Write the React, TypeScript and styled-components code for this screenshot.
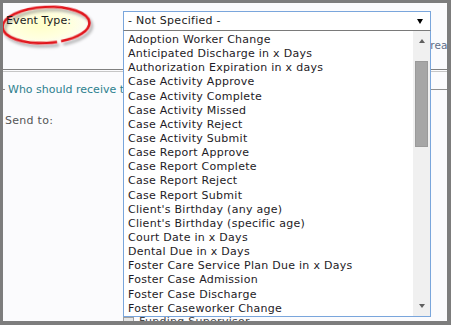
import React from 'react';
import styled, { createGlobalStyle } from 'styled-components';

const GlobalStyle = createGlobalStyle`
  html, body {
    margin: 0;
    padding: 0;
    background: #ffffff;
  }
  body {
    font-family: 'DejaVu Sans', Verdana, sans-serif;
    font-size: 11px;
  }
`;

const eventTypes = [
  'Adoption Worker Change',
  'Anticipated Discharge in x Days',
  'Authorization Expiration in x days',
  'Case Activity Approve',
  'Case Activity Complete',
  'Case Activity Missed',
  'Case Activity Reject',
  'Case Activity Submit',
  'Case Report Approve',
  'Case Report Complete',
  'Case Report Reject',
  'Case Report Submit',
  "Client's Birthday (any age)",
  "Client's Birthday (specific age)",
  'Court Date in x Days',
  'Dental Due in x Days',
  'Foster Care Service Plan Due in x Days',
  'Foster Case Admission',
  'Foster Case Discharge',
  'Foster Caseworker Change',
];

const Frame = styled.div`
  position: relative;
  box-sizing: border-box;
  width: 451px;
  height: 325px;
  border-style: solid;
  border-color: #7d7d7d;
  border-width: 3px 4px 4px 3px;
  background: #fbfbfd;
  overflow: hidden;
  display: flex;
  flex-direction: column;
  color: #222;
  font-size: 11px;
  line-height: 14px;
  letter-spacing: 0.27px;
  white-space: nowrap;
`;

const HeaderRow = styled.div`
  display: flex;
  align-items: center;
  flex: none;
  height: 20px;
  margin-top: 8px;
`;

const LabelCell = styled.div`
  position: relative;
  box-sizing: border-box;
  width: 120px;
  flex: none;
  padding-left: 3px;
`;

const LabelText = styled.span`
  position: relative;
  z-index: 1;
  color: #1b1b1b;
  letter-spacing: 0.1px;
`;

// red hand-drawn ring around the label
const Annotation = styled.svg`
  position: absolute;
  left: -3px;
  top: -11px;
  z-index: 0;
  overflow: visible;
`;

const SelectWrap = styled.div`
  position: relative;
  width: 308px;
  height: 20px;
  flex: none;
`;

const SelectBox = styled.div`
  box-sizing: border-box;
  display: flex;
  align-items: center;
  justify-content: space-between;
  height: 20px;
  padding: 0 7px 0 4px;
  border: 1px solid #7aa6dc;
  background: #ffffff;
  color: #1b1b1b;
`;

const Arrow = styled.span<{ $dir: 'up' | 'down'; $color: string; $w: number; $h: number }>`
  width: 0;
  height: 0;
  border-left: ${({ $w }) => $w / 2}px solid transparent;
  border-right: ${({ $w }) => $w / 2}px solid transparent;
  border-top: ${({ $dir, $h, $color }) => ($dir === 'down' ? `${$h}px solid ${$color}` : 'none')};
  border-bottom: ${({ $dir, $h, $color }) => ($dir === 'up' ? `${$h}px solid ${$color}` : 'none')};
`;

const DropList = styled.div`
  position: absolute;
  z-index: 5;
  left: 0;
  top: 19px;
  box-sizing: border-box;
  width: 308px;
  height: 287px;
  display: flex;
  border: 1px solid #7aa6dc;
  border-top-color: #7a7a7a;
  background: #ffffff;
`;

const Options = styled.div`
  flex: 1;
  overflow: hidden;
  padding: 2px 0 0 4px;
`;

const Option = styled.div`
  height: 14.15px;
  line-height: 14.15px;
  color: #1e1b26;
`;

const ScrollBar = styled.div`
  width: 17px;
  flex: none;
  display: flex;
  flex-direction: column;
  background: #f0f0f0;
`;

const ScrollButton = styled.div`
  height: 20px;
  display: flex;
  align-items: center;
  justify-content: center;
`;

const Thumb = styled.div`
  box-sizing: border-box;
  height: 86px;
  margin: 10px 2px 0;
  background: #a6a6a6;
  border: 1px solid #9a9a9a;
`;

const Spacer = styled.div`
  flex: 1;
`;

const SideRow = styled.div`
  margin-top: 7px;
  padding-left: 420px;
  color: #5f6f88;
  font-size: 10.5px;
  letter-spacing: 0;
`;

const Rule = styled.div`
  margin-top: 17px;
  flex: none;
  height: 1px;
  border-top: 1px solid #808080;
  border-bottom: 1px solid #c6c6c6;
`;

const Section = styled.div`
  display: flex;
  align-items: center;
  margin-top: 11px;
  height: 14px;
  color: #2d7f8e;
  letter-spacing: 0;

  &::before,
  &::after {
    content: '';
    height: 1px;
    margin-bottom: 2px;
    background: #8f8f8f;
  }
  &::before {
    width: 2px;
    margin-right: 3px;
  }
  &::after {
    flex: 1;
    margin-left: 3px;
  }
`;

const FieldLabel = styled.div`
  margin-top: 17px;
  padding-left: 2px;
  color: #555;
`;

const CheckRow = styled.div`
  display: flex;
  align-items: flex-start;
  margin-top: 187px;
  padding-left: 120px;
  color: #444;
`;

const CheckBox = styled.span`
  box-sizing: border-box;
  width: 11px;
  height: 11px;
  margin: 2px 5px 0 0;
  border: 1px solid #a0a0a0;
  background: #e6e6e6;
`;

const App = () => (
  <>
    <GlobalStyle />
    <Frame>
      <HeaderRow>
        <LabelCell>
          <Annotation width="100" height="48" viewBox="0 0 100 48">
            <defs>
              <radialGradient id="glow" cx="45%" cy="50%" r="55%">
                <stop offset="0%" stopColor="#ffffc8" />
                <stop offset="65%" stopColor="#ffffe0" />
                <stop offset="100%" stopColor="#fbfbf6" />
              </radialGradient>
              <filter id="shade" x="-20%" y="-30%" width="140%" height="170%">
                <feDropShadow dx="2" dy="3" stdDeviation="1.6" floodColor="#000" floodOpacity="0.35" />
              </filter>
            </defs>
            <ellipse cx="46" cy="22" rx="43.5" ry="18" transform="rotate(-3 46 22)" fill="url(#glow)" />
            <ellipse
              cx="46"
              cy="22"
              rx="43.5"
              ry="18"
              transform="rotate(-3 46 22)"
              fill="none"
              stroke="#e1141c"
              strokeWidth="2.6"
              strokeDasharray="180 4"
              strokeDashoffset="-40"
              filter="url(#shade)"
            />
          </Annotation>
          <LabelText>Event Type:</LabelText>
        </LabelCell>
        <SelectWrap>
          <SelectBox>
            <span>- Not Specified -</span>
            <Arrow $dir="down" $color="#000" $w={7} $h={5} />
          </SelectBox>
          <DropList>
            <Options>
              {eventTypes.map((t) => (
                <Option key={t}>{t}</Option>
              ))}
            </Options>
            <ScrollBar>
              <ScrollButton>
                <Arrow $dir="up" $color="#606060" $w={7} $h={4} />
              </ScrollButton>
              <Thumb />
              <Spacer />
              <ScrollButton>
                <Arrow $dir="down" $color="#606060" $w={7} $h={4} />
              </ScrollButton>
            </ScrollBar>
          </DropList>
        </SelectWrap>
      </HeaderRow>
      <SideRow>Create Task</SideRow>
      <Rule />
      <Section>Who should receive this notification?</Section>
      <FieldLabel>Send to:</FieldLabel>
      <CheckRow>
        <CheckBox />
        <span>Funding Supervisor</span>
      </CheckRow>
    </Frame>
  </>
);

export default App;
